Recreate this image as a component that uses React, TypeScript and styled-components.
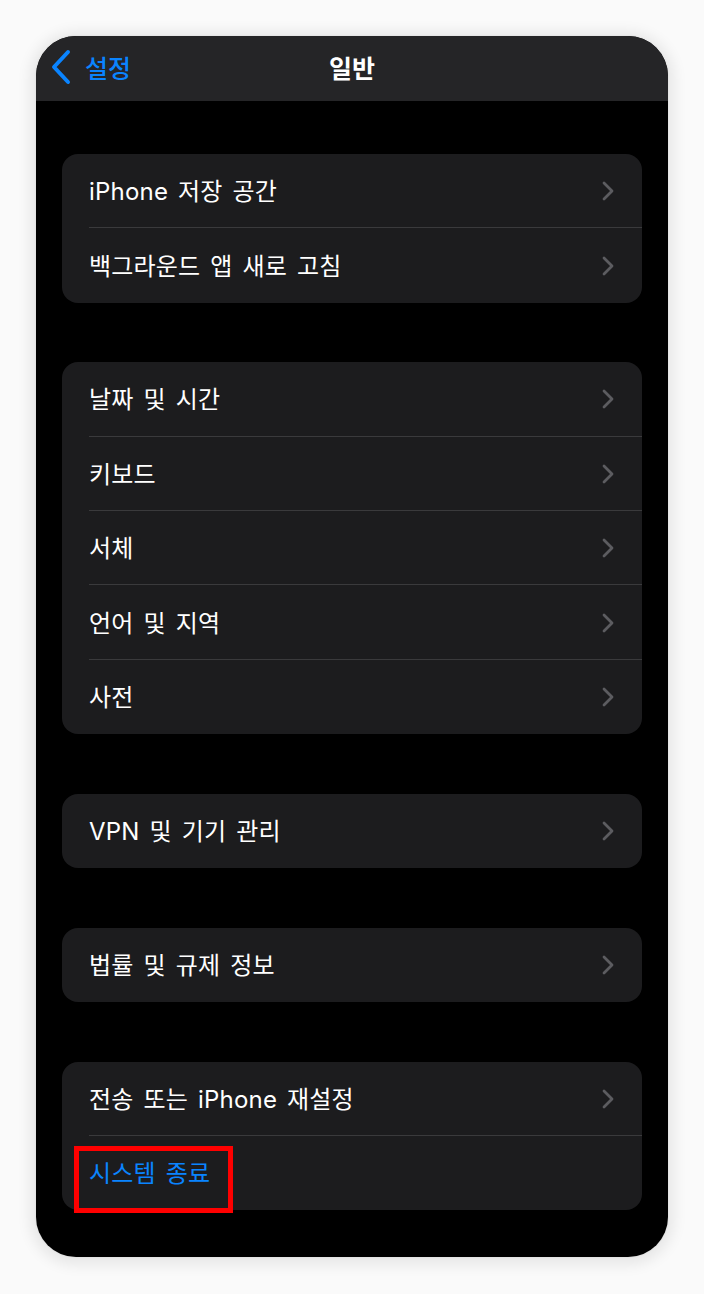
import React from "react";
import styled, { createGlobalStyle } from "styled-components";

const Global = createGlobalStyle`
  html, body { margin: 0; padding: 0; background: #fafafa; }
  body { font-family: "Inter", "Noto Sans CJK KR", sans-serif; -webkit-font-smoothing: antialiased; }
  * { box-sizing: border-box; }
`;

const Page = styled.div`
  padding: 36px 36px 37px 36px;
  width: 704px;
  height: 1294px;
`;

const Phone = styled.div`
  width: 632px;
  height: 1221px;
  background: #000;
  border-radius: 40px;
  overflow: hidden;
  box-shadow: 0 2px 14px 6px rgba(0, 0, 0, 0.08), 0 0 2px rgba(0, 0, 0, 0.1);
  display: flex;
  flex-direction: column;
`;

const NavBar = styled.div`
  height: 65px;
  flex: none;
  background: #252527;
  display: grid;
  grid-template-columns: 1fr auto 1fr;
  align-items: center;
  padding: 0 14px;
`;

const Back = styled.div`
  display: flex;
  align-items: center;
  gap: 13px;
  color: #0a84ff;
  font-family: "Noto Sans CJK KR", sans-serif;
  font-size: 25px;
  font-weight: 500;
  justify-self: start;
  margin-top: -3px;
`;

const Title = styled.div`
  color: #fff;
  font-family: "Noto Sans CJK KR", sans-serif;
  font-size: 25px;
  font-weight: 700;
  margin-top: -3px;
`;

const Content = styled.div`
  flex: 1;
  display: flex;
  flex-direction: column;
  gap: 59.5px;
  padding: 53px 26px 0 26px;
`;

const Group = styled.div`
  background: #1c1c1e;
  border-radius: 16px;
  display: flex;
  flex-direction: column;
`;

const Row = styled.div`
  position: relative;
  height: 74.4px;
  display: flex;
  align-items: center;
  padding-left: 27px;
  padding-right: 28px;
`;

const Separator = styled.div<{ $show?: boolean }>`
  position: absolute;
  left: 27px;
  right: 0;
  bottom: 0;
  height: 1px;
  background: #3a3a3c;
  display: ${(p) => (p.$show ? "block" : "none")};
`;

const Label = styled.span<{ $blue?: boolean }>`
  flex: 1;
  color: ${(p) => (p.$blue ? "#0a84ff" : "#fff")};
  font-size: 24px;
  font-family: "Inter", "Noto Sans CJK KR", sans-serif;
  word-spacing: 3px;
  letter-spacing: 0.2px;
  margin-top: -3px;
`;

const Highlight = styled.div`
  position: absolute;
  left: 12px;
  top: 10px;
  width: 159px;
  height: 67px;
  border: 5px solid #ff0000;
  z-index: 2;
`;

const Chevron = () => (
  <svg width="12" height="20" viewBox="0 0 12 20" fill="none">
    <path d="M2 2 L10 10 L2 18" stroke="#5c5c60" strokeWidth="2.8" strokeLinecap="round" strokeLinejoin="round" />
  </svg>
);

const BackChevron = () => (
  <svg width="22" height="36" viewBox="0 0 22 36" fill="none">
    <path d="M18 3 L4 18 L18 33" stroke="#0a84ff" strokeWidth="4" strokeLinecap="round" strokeLinejoin="round" />
  </svg>
);

type Item = { label: string; blue?: boolean; chevron?: boolean; mark?: boolean };

const groups: Item[][] = [
  [{ label: "iPhone 저장 공간", chevron: true }, { label: "백그라운드 앱 새로 고침", chevron: true }],
  [
    { label: "날짜 및 시간", chevron: true },
    { label: "키보드", chevron: true },
    { label: "서체", chevron: true },
    { label: "언어 및 지역", chevron: true },
    { label: "사전", chevron: true },
  ],
  [{ label: "VPN 및 기기 관리", chevron: true }],
  [{ label: "법률 및 규제 정보", chevron: true }],
  [
    { label: "전송 또는 iPhone 재설정", chevron: true },
    { label: "시스템 종료", blue: true, mark: true },
  ],
];

export default function App() {
  return (
    <>
      <Global />
      <Page>
        <Phone>
          <NavBar>
            <Back>
              <BackChevron />
              <span>설정</span>
            </Back>
            <Title>일반</Title>
            <div />
          </NavBar>
          <Content>
            {groups.map((g, gi) => (
              <Group key={gi}>
                {g.map((it, i) => (
                  <Row key={i}>
                    <Label $blue={it.blue}>{it.label}</Label>
                    {it.chevron && <Chevron />}
                    <Separator $show={i < g.length - 1} />
                    {it.mark && <Highlight />}
                  </Row>
                ))}
              </Group>
            ))}
          </Content>
        </Phone>
      </Page>
    </>
  );
}
